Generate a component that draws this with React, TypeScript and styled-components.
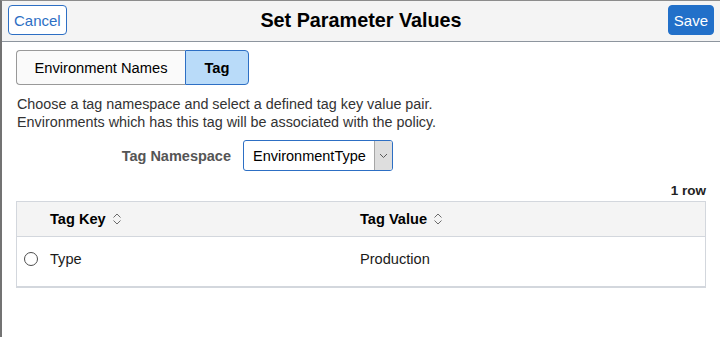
import styled, { createGlobalStyle, css } from "styled-components";

const GlobalStyle = createGlobalStyle`
    html, body {
        margin: 0;
        padding: 0;
        background: #ffffff;
    }
    body {
        font-family: "Liberation Sans", Arial, sans-serif;
        color: #1a1a1a;
    }
`;

const Dialog = styled.div`
    width: 720px;
    height: 337px;
    box-sizing: border-box;
    border-left: 2px solid #737373;
    border-top: 1px solid #8c8c8c;
    background: #ffffff;
    display: flex;
    flex-direction: column;
`;

const Header = styled.header`
    height: 41px;
    box-sizing: border-box;
    background: #f4f4f4;
    border-bottom: 1px solid #8d959e;
    display: flex;
    align-items: center;
    justify-content: space-between;
    padding: 0 6px 2px 6px;
    position: relative;
`;

const Title = styled.h1`
    position: absolute;
    left: 0;
    right: 0;
    top: 8px;
    margin: 0;
    text-align: center;
    font-size: 19.8px;
    font-weight: 700;
    color: #000;
    pointer-events: none;
`;

const HeaderButton = styled.button<{ primary?: boolean }>`
    height: 30px;
    padding: 0 5px;
    font-family: inherit;
    font-size: 15px;
    border-radius: 4px;
    border: 1px solid #2d6fc4;
    ${({ primary }) =>
        primary
            ? css`
                  background: #2270c9;
                  color: #ffffff;
                  border-color: #2270c9;
              `
            : css`
                  background: #ffffff;
                  color: #2d6fc4;
              `}
`;

const Content = styled.main`
    padding: 8px 14px 0 14px;
    display: flex;
    flex-direction: column;
`;

const Segmented = styled.div`
    display: flex;
    height: 35px;
`;

const Segment = styled.button<{ active?: boolean }>`
    font-family: inherit;
    font-size: 14.7px;
    padding: 0;
    height: 100%;
    color: #000;
    ${({ active }) =>
        active
            ? css`
                  background: #b9dbf9;
                  border: 1px solid #2d6fc4;
                  font-weight: 700;
                  border-radius: 0 4px 4px 0;
                  width: 64px;
              `
            : css`
                  background: #fafafa;
                  border: 1px solid #999999;
                  border-right: none;
                  border-radius: 4px 0 0 4px;
                  width: 169px;
              `}
`;

const Description = styled.p`
    margin: 10px 0 0 1px;
    font-size: 14.35px;
    line-height: 18px;
    color: #333333;
`;

const FieldRow = styled.div`
    display: flex;
    align-items: center;
    margin-top: 9px;
    padding-left: 104px;
    gap: 12px;
`;

const FieldLabel = styled.label`
    font-size: 14.5px;
    font-weight: 700;
    color: #555555;
    width: 111px;
    text-align: right;
`;

const Select = styled.div`
    width: 150px;
    height: 31px;
    box-sizing: border-box;
    border: 1px solid #2d6fc4;
    border-radius: 3px;
    display: flex;
    align-items: stretch;
    overflow: hidden;
`;

const SelectValue = styled.span`
    flex: 1;
    display: flex;
    align-items: center;
    padding-left: 9px;
    font-size: 14.5px;
    color: #000;
`;

const SelectArrow = styled.span`
    width: 17px;
    background: #dedede;
    border-left: 1px solid #a6a6a6;
    display: flex;
    align-items: center;
    justify-content: center;
`;

const RowCount = styled.div`
    text-align: right;
    font-size: 13.5px;
    font-weight: 700;
    color: #222;
    margin-top: 12px;
`;

const Table = styled.div`
    margin-top: 3px;
    border: 1px solid #d3d7dd;
    border-bottom-width: 2px;
    width: 690px;
    box-sizing: border-box;
`;

const TableRow = styled.div<{ head?: boolean }>`
    display: grid;
    grid-template-columns: 33px 310px 1fr;
    align-items: center;
    font-size: 14.6px;
    box-sizing: border-box;
    ${({ head }) =>
        head
            ? css`
                  height: 35px;
                  background: #f4f4f4;
                  border-bottom: 1px solid #d3d7dd;
                  font-weight: 700;
                  color: #000;
              `
            : css`
                  height: 49px;
                  padding-bottom: 6px;
                  background: #ffffff;
                  color: #1a1a1a;
              `}
`;

const HeadCell = styled.span`
    display: flex;
    align-items: center;
    gap: 6px;
`;

const Radio = styled.span`
    width: 12px;
    height: 12px;
    border: 1px solid #4d4d4d;
    border-radius: 50%;
    justify-self: start;
    margin-left: 7px;
`;

const SortIcon = () => (
    <svg width="10" height="14" viewBox="0 0 10 14" fill="none" stroke="#6b6b6b" strokeWidth="1">
        <path d="M1.5 5.5 L5 2 L8.5 5.5" />
        <path d="M1.5 8.5 L5 12 L8.5 8.5" />
    </svg>
);

const ChevronDown = () => (
    <svg width="9" height="6" viewBox="0 0 9 6" fill="none" stroke="#5a5a5a" strokeWidth="1">
        <path d="M1 1 L4.5 4.5 L8 1" />
    </svg>
);

export default function App() {
    return (
        <>
            <GlobalStyle />
            <Dialog>
                <Header>
                    <HeaderButton>Cancel</HeaderButton>
                    <Title>Set Parameter Values</Title>
                    <HeaderButton primary>Save</HeaderButton>
                </Header>
                <Content>
                    <Segmented>
                        <Segment>Environment Names</Segment>
                        <Segment active>Tag</Segment>
                    </Segmented>
                    <Description>
                        Choose a tag namespace and select a defined tag key value pair.
                        <br />
                        Environments which has this tag will be associated with the policy.
                    </Description>
                    <FieldRow>
                        <FieldLabel>Tag Namespace</FieldLabel>
                        <Select>
                            <SelectValue>EnvironmentType</SelectValue>
                            <SelectArrow>
                                <ChevronDown />
                            </SelectArrow>
                        </Select>
                    </FieldRow>
                    <RowCount>1 row</RowCount>
                    <Table>
                        <TableRow head>
                            <span />
                            <HeadCell>
                                Tag Key <SortIcon />
                            </HeadCell>
                            <HeadCell>
                                Tag Value <SortIcon />
                            </HeadCell>
                        </TableRow>
                        <TableRow>
                            <Radio />
                            <span>Type</span>
                            <span>Production</span>
                        </TableRow>
                    </Table>
                </Content>
            </Dialog>
        </>
    );
}
